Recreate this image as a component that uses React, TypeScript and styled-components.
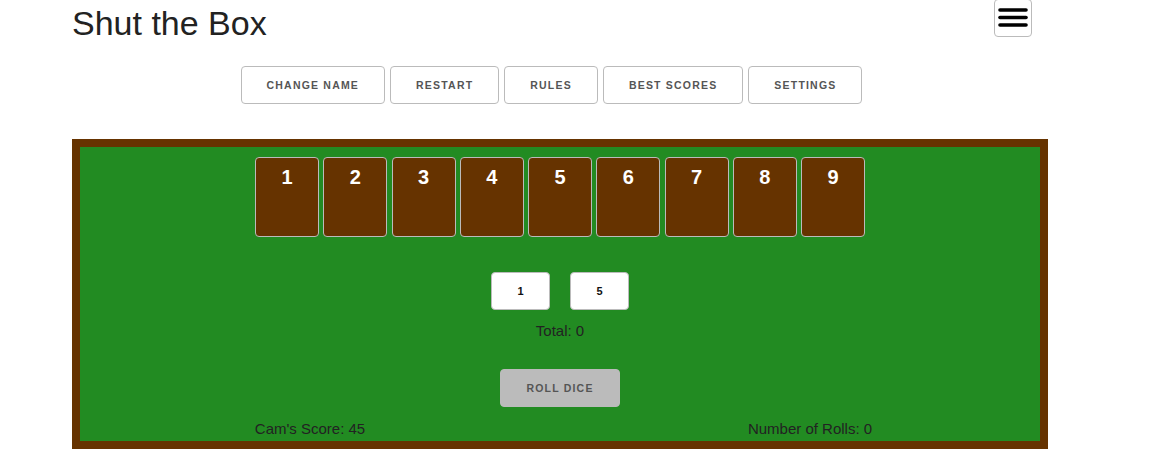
import React from "react";
import styled, { createGlobalStyle } from "styled-components";

const GlobalStyle = createGlobalStyle`
  html, body {
    margin: 0;
    padding: 0;
    background: #fff;
  }
  body {
    font-family: "Liberation Sans", Arial, sans-serif;
    font-size: 15px;
    line-height: 24px;
    color: #222;
  }
  * { box-sizing: border-box; }
`;

const Page = styled.div`
  width: 976px;
  margin-left: 72px;
`;

const Header = styled.header`
  display: flex;
  justify-content: space-between;
  align-items: flex-start;
  padding-right: 16px;
`;

const Title = styled.h1`
  margin: 4px 0 0;
  font-size: 34px;
  line-height: 39px;
  font-weight: 400;
  color: #222;
`;

const MenuButton = styled.button`
  width: 38px;
  height: 38px;
  margin-top: -1px;
  padding: 0;
  display: flex;
  align-items: center;
  justify-content: center;
  background: #fff;
  border: 1px solid #bbb;
  border-radius: 4px;
  cursor: pointer;
`;

const Nav = styled.nav`
  display: flex;
  justify-content: center;
  gap: 5px;
  margin-top: 23px;
  padding-right: 17px;
`;

const NavButton = styled.button`
  height: 38px;
  padding: 0 25px;
  background: transparent;
  border: 1px solid #bbb;
  border-radius: 4px;
  color: #555;
  font-family: "Liberation Sans", Arial, sans-serif;
  font-size: 10.5px;
  font-weight: 700;
  letter-spacing: 1.2px;
  line-height: 37px;
  text-transform: uppercase;
  white-space: nowrap;
  cursor: pointer;
`;

const Board = styled.section`
  margin-top: 35px;
  border: 8px solid #663300;
  background: #228b22;
  height: 310px;
  padding-top: 10px;
  display: flex;
  flex-direction: column;
  align-items: center;
`;

const Tiles = styled.div`
  display: flex;
  gap: 4.25px;
`;

const Tile = styled.div`
  width: 64px;
  height: 80px;
  background: #663300;
  border: 1px solid #bbb;
  border-radius: 4px;
  color: #fff;
  font-size: 20px;
  font-weight: 700;
  line-height: 23px;
  text-align: center;
  padding-top: 8px;
`;

const DiceRow = styled.div`
  display: flex;
  gap: 20px;
  margin-top: 35px;
`;

const Die = styled.div`
  width: 59px;
  height: 38px;
  background: #fff;
  border: 1px solid #bbb;
  border-radius: 4px;
  display: flex;
  align-items: center;
  justify-content: center;
  color: #111;
  font-size: 11px;
  font-weight: 700;
`;

const Total = styled.div`
  margin-top: 9px;
  font-size: 15px;
  line-height: 24px;
`;

const RollButton = styled.button`
  margin-top: 26px;
  height: 38px;
  padding: 0 25px;
  background: #bbb;
  border: 1px solid #bbb;
  border-radius: 4px;
  color: #555;
  font-family: "Liberation Sans", Arial, sans-serif;
  font-size: 10.5px;
  font-weight: 700;
  letter-spacing: 1.2px;
  text-transform: uppercase;
  white-space: nowrap;
`;

const Footer = styled.div`
  margin-top: 10px;
  display: grid;
  grid-template-columns: 250px 250px;
  column-gap: 250px;
  font-size: 15px;
  line-height: 24px;
`;

const Stat = styled.div`
  text-align: center;
  white-space: nowrap;
`;

const HamburgerIcon = () => (
  <svg width="30" height="22" viewBox="0 0 30 22" aria-hidden="true">
    <g stroke="#000" strokeWidth="3.6" strokeLinecap="round">
      <line x1="2" y1="3" x2="28" y2="3" />
      <line x1="2" y1="10.5" x2="28" y2="10.5" />
      <line x1="2" y1="18" x2="28" y2="18" />
    </g>
  </svg>
);

const navItems = ["Change Name", "Restart", "Rules", "Best Scores", "Settings"];
const tiles = [1, 2, 3, 4, 5, 6, 7, 8, 9];

export default function App() {
  return (
    <>
      <GlobalStyle />
      <Page>
        <Header>
          <Title>Shut the Box</Title>
          <MenuButton aria-label="Menu">
            <HamburgerIcon />
          </MenuButton>
        </Header>
        <Nav>
          {navItems.map((n) => (
            <NavButton key={n}>{n}</NavButton>
          ))}
        </Nav>
        <Board>
          <Tiles>
            {tiles.map((t) => (
              <Tile key={t}>{t}</Tile>
            ))}
          </Tiles>
          <DiceRow>
            <Die>1</Die>
            <Die>5</Die>
          </DiceRow>
          <Total>Total: 0</Total>
          <RollButton>Roll Dice</RollButton>
          <Footer>
            <Stat>Cam's Score: 45</Stat>
            <Stat>Number of Rolls: 0</Stat>
          </Footer>
        </Board>
      </Page>
    </>
  );
}
